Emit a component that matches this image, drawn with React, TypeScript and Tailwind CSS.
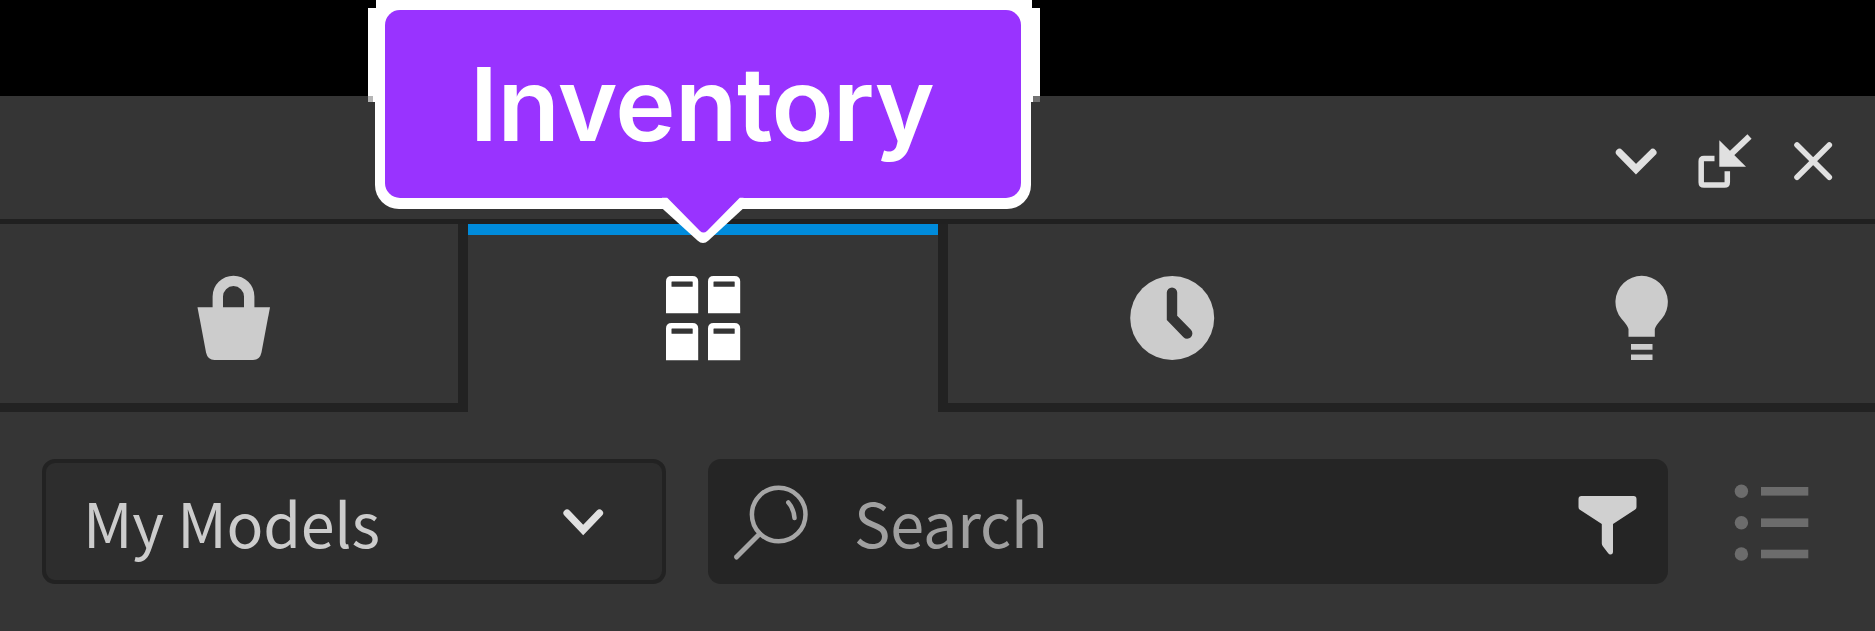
import type { ReactNode } from "react";

function Tab({ className, children }: { className: string; children: ReactNode }) {
  return <button className={`flex items-center justify-center ${className}`}>{children}</button>;
}

function BagIcon() {
  return (
    <svg className="size-[90px]" viewBox="189 273 90 90" fill="#ccc">
      <path d="M217.8 309V296.600a15.700 15.700 0 0 1 31.400 0V309" fill="none" stroke="#ccc" strokeWidth="10.400" />
      <path d="M197.500 307.300h72.500l-8.600 45.500q-1.600 7.200-8.400 7.200h-38.500q-6.800 0-8.400-7.200z" />
    </svg>
  );
}

function GridIcon() {
  const tiles = [[666, 276], [708, 276], [666, 323], [708, 323]];
  return (
    <svg className="size-[90px]" viewBox="658 273 90 90">
      {tiles.map(([x, y]) => (
        <g key={`${x}-${y}`} transform={`translate(${x} ${y})`}>
          <path d="M0 5.500Q0 0 5.500 0h21Q32.200 0 32.200 5.500V37.300H0z" fill="#fff" />
          <rect x="5.500" y="5.500" width="21.200" height="5.300" rx="0.500" fill="#353535" />
        </g>
      ))}
    </svg>
  );
}

function ClockIcon() {
  return (
    <svg className="size-[90px]" viewBox="1127 273 90 90">
      <circle cx="1172.200" cy="318" r="42" fill="#ccc" />
      <path d="M1172 292.600V318l15.200 15.500" fill="none" stroke="#353535" strokeWidth="10.400" strokeLinecap="round" />
    </svg>
  );
}

function BulbIcon() {
  return (
    <svg className="size-[90px]" viewBox="1595.500 273 90 90" fill="#ccc">
      <path d="M1628 336.700V329Q1627 325.500 1621 318.800A26.200 26.200 0 1 1 1661.300 318.800Q1655.300 325.500 1654.300 329V336.700z" />
      <path d="M1630.500 344h21.500v5.700h-21.500zM1630.500 354.400h21.500v5.600h-21.500z" />
    </svg>
  );
}

function Callout() {
  return (
    <div className="absolute top-0 left-[368px] h-[244px] w-[672px]">
      <div className="absolute top-0 left-2 h-2 w-[656px] bg-white" />
      <div className="absolute top-2 left-0 h-[88px] w-[672px] bg-white" />
      <div className="absolute top-24 left-0 h-[6px] w-[5px] bg-[#b5b5b5]" />
      <div className="absolute top-24 right-0 h-[6px] w-[7px] bg-[#727272]" />
      <div className="absolute top-24 left-[5px] h-[6px] w-[660px] bg-white" />
      <div className="absolute top-[100px] left-[6.500px] h-[108.500px] w-[656.500px] rounded-b-[24px] bg-white" />
      <div className="absolute top-[9.500px] left-[17px] flex h-[188px] w-[636px] items-center justify-center rounded-[15px] bg-[#9933ff]">
        <span className="relative -left-px font-['Inter'] text-[102px] leading-none font-semibold tracking-[-0.500px] whitespace-nowrap text-white">
          Inventory
        </span>
      </div>
      <svg className="absolute top-[190px] left-[282px] h-[56px] w-[106px]" viewBox="650 190 106 56">
        <path d="M662 197.500V208.200L697.500 240.500Q703 245.500 708.500 240.500L743.500 208.200V197.500z" fill="#fff" />
        <path d="M660 190H748V197.500H740L707 231Q703.500 234 700 231L667 197.500H660z" fill="#93f" />
      </svg>
    </div>
  );
}

export default function App() {
  return (
    <main className="relative flex h-[631px] w-[1875px] flex-col overflow-hidden bg-[#353535] font-['Noto_Sans_CJK_SC',sans-serif]">
      <div className="h-24 shrink-0 bg-black" />
      <header className="flex h-32 shrink-0 items-start justify-end border-b-[5px] border-[#202020] pt-[34px] pr-[33px]">
        <svg className="h-[62px] w-[232px]" viewBox="1610 130 232 62" fill="none" stroke="#e0e0e0">
          <path d="M1619.500 152.500L1636 169.200L1652.800 152.500" strokeWidth="7.400" strokeLinecap="round" />
          <path d="M1714.500 158.500H1704Q1701.200 158.500 1701.200 161.300V182.200Q1701.200 185 1704 185H1724.500Q1727.300 185 1727.300 182.200V171.300" strokeWidth="5.500" />
          <path d="M1719.300 140.200V166.800H1746z" fill="#e0e0e0" stroke="none" />
          <path d="M1730 155L1749.500 136.500" strokeWidth="6" />
          <path d="M1797 145L1829.300 177.300M1829.300 145L1797 177.300" strokeWidth="5.600" strokeLinecap="round" />
        </svg>
      </header>
      <nav className="grid h-[188px] shrink-0 grid-cols-[468px_470px_468px_469px]">
        <Tab className="shadow-[inset_-10px_-9px_0_#222]"><BagIcon /></Tab>
        <Tab className="shadow-[inset_0_11px_0_#008bdb]"><GridIcon /></Tab>
        <Tab className="shadow-[inset_10px_-9px_0_#222]"><ClockIcon /></Tab>
        <Tab className="shadow-[inset_0_-9px_0_#222]"><BulbIcon /></Tab>
      </nav>
      <section className="flex items-center pt-[47px] pl-[42px]">
        <button className="flex h-[125px] w-[624px] items-center justify-between rounded-[13px] border-4 border-[#222] bg-[#2d2d2d] pr-[53px] pl-[37px]">
          <span className="text-[61px] leading-none tracking-[-0.250px] whitespace-nowrap text-[#ccc]">My Models</span>
          <svg className="h-[50px] w-[50px]" viewBox="559 496.500 50 50" fill="none" stroke="#e0e0e0">
            <path d="M567 512.500L583.200 529.500L599.500 512.500" strokeWidth="7.200" strokeLinecap="round" />
          </svg>
        </button>
        <div className="ml-[42px] flex h-[125px] w-[960px] items-center rounded-[13px] bg-[#252525] pr-[23px] pl-[20px]">
          <svg className="h-[90px] w-[90px] shrink-0" viewBox="728 476.500 90 90" fill="none" stroke="#a6a6a6">
            <circle cx="778.700" cy="514" r="26.800" strokeWidth="4.500" />
            <path d="M759.500 533.500L736.500 556.500" strokeWidth="5" strokeLinecap="round" />
            <path d="M788.300 502Q793.700 508 794.500 517.500" strokeWidth="4.500" strokeLinecap="round" />
          </svg>
          <span className="ml-[36px] grow text-[61px] leading-none tracking-[-0.100px] whitespace-nowrap text-[#a0a0a0]">Search</span>
          <svg className="h-[80px] w-[70px] shrink-0" viewBox="1575 481.500 70 80" fill="#d0d0d0">
            <path d="M1581.500 495.500h52q3 0 3 3v8q0 1.500-1.300 2.500L1613 523.500V551q0 3-2.500 3-1.500 0-2.500-1.500L1603 546q-1.200-1.500-1.200-3V523.500L1579.500 509q-1-1-1-2.500v-8q0-3 3-3z" />
          </svg>
        </div>
        <svg className="ml-[62px] h-[80px] w-[84px]" viewBox="1730 481.500 84 80" fill="#6c6c6c">
          {[490.800, 522.200, 553.500].map((y) => (
            <g key={y} transform={`translate(0 ${y})`}>
              <circle cx="1741.400" cy="0" r="6.700" />
              <rect x="1761" y="-4.300" width="47.300" height="8.600" />
            </g>
          ))}
        </svg>
      </section>
      <Callout />
    </main>
  );
}
